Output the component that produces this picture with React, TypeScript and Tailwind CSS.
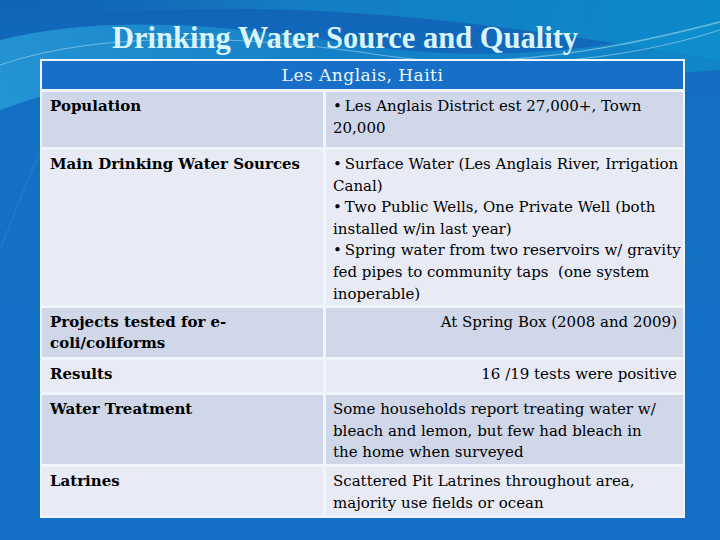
import React from "react";

function Bg() {
  return (
    <svg className="absolute inset-0" width="720" height="540" viewBox="0 0 720 540" preserveAspectRatio="none">
      <defs>
        <linearGradient id="base" x1="0" y1="0" x2="0" y2="1">
          <stop offset="0" stopColor="#1064b6" />
          <stop offset="0.2" stopColor="#1470c5" />
          <stop offset="1" stopColor="#1470c6" />
        </linearGradient>
        <linearGradient id="band" x1="0" y1="0" x2="1" y2="0">
          <stop offset="0" stopColor="#2aa0da" />
          <stop offset="0.45" stopColor="#1688cb" />
          <stop offset="1" stopColor="#0f8fcc" />
        </linearGradient>
        <linearGradient id="topband" x1="0" y1="0" x2="1" y2="0">
          <stop offset="0" stopColor="#1265b6" stopOpacity="0" />
          <stop offset="0.4" stopColor="#1580c4" />
          <stop offset="1" stopColor="#0c8ccb" />
        </linearGradient>
      </defs>
      <rect width="720" height="540" fill="url(#base)" />
      <path d="M0 0 L720 0 L720 60 C600 40 470 20 340 12 C230 6 120 8 0 20 Z" fill="url(#topband)" opacity="0.9" />
      <path d="M0 40 C120 10 260 30 360 45 C470 62 600 55 720 20 L720 70 C600 80 470 70 360 62 C240 54 110 70 0 110 Z" fill="url(#band)" opacity="0.75" />
      <path d="M0 65 C100 30 250 35 380 55 C500 72 620 62 720 30" stroke="#bfe8f6" strokeWidth="1" fill="none" opacity="0.5" />
      <path d="M500 60 C580 55 650 40 720 22" stroke="#d7f3fb" strokeWidth="1.5" fill="none" opacity="0.45" />
      <path d="M0 250 C20 200 40 140 70 110" stroke="#3aa6dc" strokeWidth="1" fill="none" opacity="0.3" />
    </svg>
  );
}

function Row({
  left,
  right,
  h,
  bg,
  rightAlign,
}: {
  left: React.ReactNode;
  right: React.ReactNode;
  h: string;
  bg: string;
  rightAlign?: boolean;
}) {
  return (
    <div className={`flex gap-[3px] ${h}`}>
      <div className={`w-[281px] shrink-0 ${bg} pl-[8px] pt-[4px] font-['DejaVu_Serif',serif] font-bold text-[15px] leading-[21px] text-black whitespace-nowrap`}>
        {left}
      </div>
      <div
        className={`flex-1 min-w-0 overflow-hidden ${bg} pl-[7px] pr-[6px] pt-[4px] font-['DejaVu_Serif',serif] text-[15px] leading-[21.6px] text-black whitespace-nowrap ${
          rightAlign ? "text-right" : ""
        }`}
      >
        {right}
      </div>
    </div>
  );
}

export default function App() {
  const odd = "bg-[#cfd7e9]";
  const even = "bg-[#e8ebf5]";
  const b = "•\u2009";
  return (
    <div className="relative w-[720px] h-[540px] overflow-hidden font-['DejaVu_Serif',serif]">
      <Bg />
      <div className="relative flex flex-col">
        <div className="h-[59px] pl-[112px] pt-[19px]">
          <h1 className="font-['Liberation_Serif',serif] text-[30.5px] leading-[38px] font-bold text-[#d8f5fb] whitespace-nowrap">
            Drinking Water Source and Quality
          </h1>
        </div>
        <div className="ml-[40px] w-[645px] bg-[#eef6fb] p-[2px] flex flex-col gap-[3px]">
          <div className="h-[28px] bg-[#176fc8] text-center font-['DejaVu_Serif',serif] text-[17px] tracking-[0.5px] leading-[28px] text-[#eef8fc]">
            Les Anglais, Haiti
          </div>
          <Row
            h="h-[55px]"
            bg={odd}
            left="Population"
            right={
              <>
                {b}Les Anglais District est 27,000+, Town
                <br />
                20,000
              </>
            }
          />
          <Row
            h="h-[155px]"
            bg={even}
            left="Main Drinking Water Sources"
            right={
              <>
                {b}Surface Water (Les Anglais River, Irrigation
                <br />
                Canal)
                <br />
                {b}Two Public Wells, One Private Well (both
                <br />
                installed w/in last year)
                <br />
                {b}Spring water from two reservoirs w/ gravity
                <br />
                fed pipes to community taps&nbsp; (one system
                <br />
                inoperable)
              </>
            }
          />
          <Row
            h="h-[49px]"
            bg={odd}
            left={
              <>
                Projects tested for e-
                <br />
                coli/coliforms
              </>
            }
            right="At Spring Box (2008 and 2009)"
            rightAlign
          />
          <Row h="h-[32px]" bg={even} left="Results" right="16 /19 tests were positive" rightAlign />
          <Row
            h="h-[69px]"
            bg={odd}
            left="Water Treatment"
            right={
              <>
                Some households report treating water w/
                <br />
                bleach and lemon, but few had bleach in
                <br />
                the home when surveyed
              </>
            }
          />
          <Row
            h="h-[49px]"
            bg={even}
            left="Latrines"
            right={
              <>
                Scattered Pit Latrines throughout area,
                <br />
                majority use fields or ocean
              </>
            }
          />
        </div>
      </div>
    </div>
  );
}
